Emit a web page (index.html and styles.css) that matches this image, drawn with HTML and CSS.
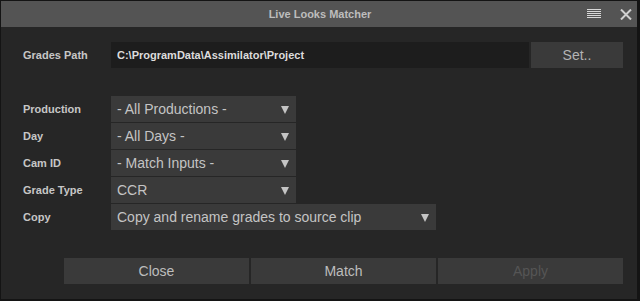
FILE: index.html
```html
<!DOCTYPE html>
<html>
<head>
<meta charset="utf-8">
<link rel="stylesheet" href="styles.css">
</head>
<body>
<div class="window">
  <div class="titlebar">
    <div class="title">Live Looks Matcher</div>
    <div class="tools">
      <svg class="menu-icon" width="14" height="9" viewBox="0 0 14 9"><g fill="#d8d8d8"><rect x="0" y="0" width="14" height="1"/><rect x="0" y="2" width="14" height="1"/><rect x="0" y="4" width="14" height="1"/><rect x="0" y="6" width="14" height="1"/><rect x="0" y="8" width="14" height="1"/></g></svg>
      <svg class="close-icon" width="12" height="11" viewBox="0 0 12 11"><path d="M1 0.5 L11 10.5 M11 0.5 L1 10.5" stroke="#cfcfcf" stroke-width="2" fill="none"/></svg>
    </div>
  </div>
  <div class="content">
    <div class="path-row">
      <div class="label">Grades Path</div>
      <div class="path-field">C:\ProgramData\Assimilator\Project</div>
      <div class="btn set-btn">Set..</div>
    </div>
    <div class="form">
      <div class="row">
        <div class="label">Production</div>
        <div class="select"><span>- All Productions -</span><i class="arrow"></i></div>
      </div>
      <div class="row">
        <div class="label">Day</div>
        <div class="select"><span>- All Days -</span><i class="arrow"></i></div>
      </div>
      <div class="row">
        <div class="label">Cam ID</div>
        <div class="select"><span>- Match Inputs -</span><i class="arrow"></i></div>
      </div>
      <div class="row">
        <div class="label">Grade Type</div>
        <div class="select"><span>CCR</span><i class="arrow"></i></div>
      </div>
      <div class="row">
        <div class="label">Copy</div>
        <div class="select wide"><span>Copy and rename grades to source clip</span><i class="arrow"></i></div>
      </div>
    </div>
    <div class="actions">
      <div class="btn action">Close</div>
      <div class="btn action">Match</div>
      <div class="btn action disabled">Apply</div>
    </div>
  </div>
</div>
</body>
</html>
```

FILE: styles.css
```css
html, body {
  margin: 0;
  padding: 0;
  background: #141414;
}
body {
  width: 640px;
  height: 301px;
  overflow: hidden;
  font-family: "Liberation Sans", Arial, sans-serif;
}
.window {
  margin: 1px 3px 2px 1px;
  height: 298px;
  background: #262626;
  display: flex;
  flex-direction: column;
}
.titlebar {
  height: 26px;
  background: #545454;
  position: relative;
  display: flex;
  align-items: center;
  justify-content: center;
}
.title {
  color: #bdbdbd;
  font-weight: bold;
  font-size: 11px;
  margin-left: 2px;
}
.tools {
  position: absolute;
  right: 5px;
  top: 8px;
  display: flex;
  align-items: flex-start;
  gap: 19px;
}
.menu-icon {
  display: block;
  margin-top: 0px;
}
.close-icon {
  display: block;
}
.content {
  padding: 15px 14px 15px 22px;
  display: flex;
  flex-direction: column;
}
.label {
  width: 88px;
  flex: none;
  color: #c6c6c6;
  font-weight: bold;
  font-size: 11px;
}
.path-row {
  display: flex;
  align-items: center;
  height: 26px;
}
.path-field {
  width: 412px;
  height: 26px;
  background: #1d1d1d;
  color: #dcdcdc;
  font-weight: bold;
  font-size: 11px;
  line-height: 26px;
  padding-left: 6px;
}
.btn {
  background: #3a3a3a;
  color: #bdbdbd;
  font-size: 14px;
  height: 26px;
  line-height: 26px;
  text-align: center;
}
.set-btn {
  width: 92px;
  margin-left: 2px;
  color: #b4b4b4;
}
.form {
  margin-top: 28px;
  display: flex;
  flex-direction: column;
  gap: 1px;
}
.row {
  display: flex;
  align-items: center;
  height: 26px;
}
.select {
  width: 185px;
  height: 26px;
  background: #3a3a3a;
  color: #c4c4c4;
  font-size: 14px;
  display: flex;
  align-items: center;
  justify-content: space-between;
  padding: 0 7px 0 6px;
  box-sizing: border-box;
}
.select.wide {
  width: 325px;
}
.arrow {
  width: 0;
  height: 0;
  border-left: 4.5px solid transparent;
  border-right: 4.5px solid transparent;
  border-top: 8px solid #c4c4c4;
  margin-top: 1px;
}
.actions {
  margin-top: 28px;
  display: flex;
  gap: 2px;
  padding-left: 41px;
}
.action {
  width: 185px;
}
.disabled {
  color: #555555;
}
```
